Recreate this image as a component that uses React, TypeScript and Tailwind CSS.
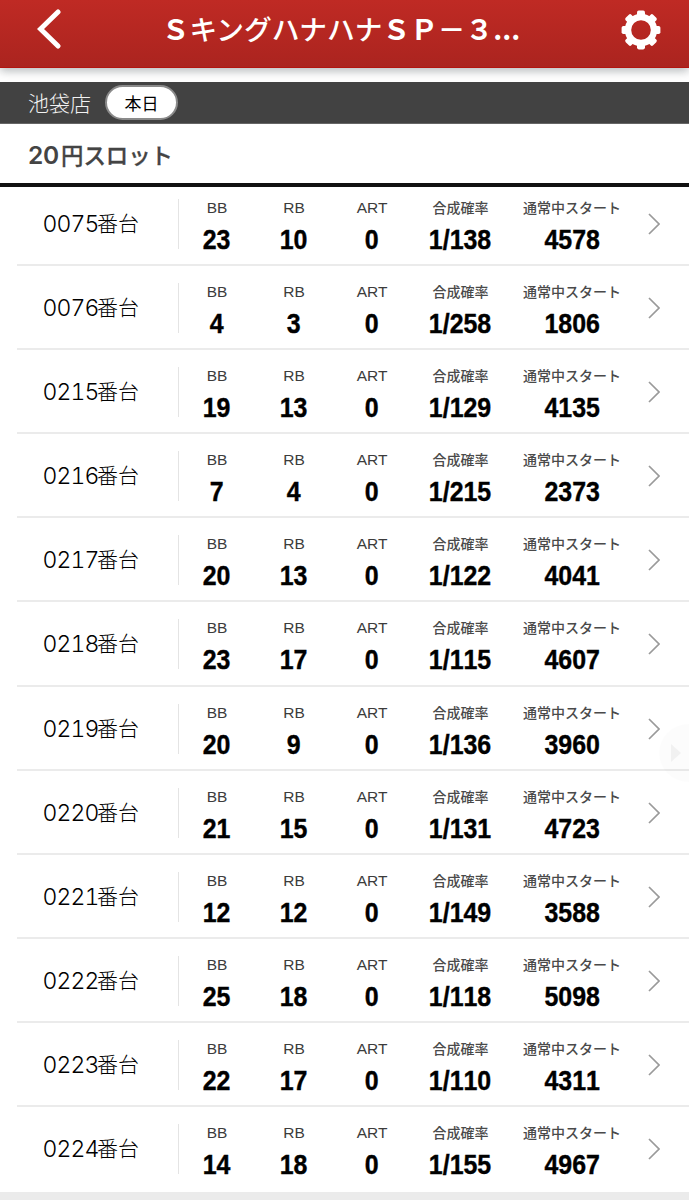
interface Machine {
  no: string;
  bb: number;
  rb: number;
  art: number;
  rate: string;
  start: number;
}

const machines: Machine[] = [
  { no: "0075", bb: 23, rb: 10, art: 0, rate: "1/138", start: 4578 },
  { no: "0076", bb: 4, rb: 3, art: 0, rate: "1/258", start: 1806 },
  { no: "0215", bb: 19, rb: 13, art: 0, rate: "1/129", start: 4135 },
  { no: "0216", bb: 7, rb: 4, art: 0, rate: "1/215", start: 2373 },
  { no: "0217", bb: 20, rb: 13, art: 0, rate: "1/122", start: 4041 },
  { no: "0218", bb: 23, rb: 17, art: 0, rate: "1/115", start: 4607 },
  { no: "0219", bb: 20, rb: 9, art: 0, rate: "1/136", start: 3960 },
  { no: "0220", bb: 21, rb: 15, art: 0, rate: "1/131", start: 4723 },
  { no: "0221", bb: 12, rb: 12, art: 0, rate: "1/149", start: 3588 },
  { no: "0222", bb: 25, rb: 18, art: 0, rate: "1/118", start: 5098 },
  { no: "0223", bb: 22, rb: 17, art: 0, rate: "1/110", start: 4311 },
  { no: "0224", bb: 14, rb: 18, art: 0, rate: "1/155", start: 4967 },
];

function GearIcon() {
  return (
    <svg viewBox="-20 -20 40 40" className="size-10">
      <circle r="13" fill="none" stroke="white" strokeWidth="6.4" />
      {[0, 45, 90, 135, 180, 225, 270, 315].map((deg) => (
        <rect
          key={deg}
          x="-4"
          y="-19.4"
          width="8"
          height="7"
          rx="1.8"
          fill="white"
          transform={`rotate(${deg})`}
        />
      ))}
    </svg>
  );
}

function Stat({ label, value }: { label: string; value: string | number }) {
  const latin = /^[A-Z]+$/.test(label);

  return (
    <div className="flex flex-col items-center whitespace-nowrap">
      {latin ? (
        <span className="h-5 text-[15.5px] leading-5 text-[#3c3c3c]">{label}</span>
      ) : (
        <span className="h-5 font-['Noto_Sans_CJK_JP',sans-serif] text-[14px] leading-[18px] font-medium text-[#4a4a4a]">
          {label}
        </span>
      )}
      <span className="mt-2 h-7 scale-x-[0.89] text-[28px] leading-7 font-bold text-black [font-kerning:none] [-webkit-text-stroke:0.4px_black]">
        {value}
      </span>
    </div>
  );
}

function MachineRow({ machine }: { machine: Machine }) {
  return (
    <li className="ml-[17px] flex h-[84.14px] items-start border-b-2 border-[#ebebeb] last:border-transparent">
      <div className="mt-[17px] flex h-[50px] w-[162px] shrink-0 items-center border-r border-[#e4e4e4] pl-[25.5px] font-['Inter','Noto_Sans_CJK_JP',sans-serif] font-light text-black">
        <span className="w-[54.5px] text-[23px] leading-[50px] tracking-[-0.9px] tabular-nums">
          {machine.no}
        </span>
        <span className="text-[21px] leading-[50px]">番台</span>
      </div>
      <div className="mt-4 -ml-[0.5px] grid w-[452px] shrink-0 grid-cols-[77px_77px_79px_98px_125px]">
        <Stat label="BB" value={machine.bb} />
        <Stat label="RB" value={machine.rb} />
        <Stat label="ART" value={machine.art} />
        <Stat label="合成確率" value={machine.rate} />
        <Stat label="通常中スタート" value={machine.start} />
      </div>
      <svg viewBox="0 0 12 22" className="mt-[31px] ml-[17.5px] h-[22px] w-3 shrink-0">
        <path d="M1 1l10 10L1 21" fill="none" stroke="#9a9a9a" strokeWidth="1.7" />
      </svg>
    </li>
  );
}

export default function App() {
  return (
    <main className="relative h-[1200px] w-full overflow-hidden bg-[#ebebeb] font-['Liberation_Sans','Noto_Sans_CJK_JP',sans-serif]">
      <div className="h-[1191.5px] bg-white">
        <header className="flex h-17 items-start justify-between border-b border-[#b3140f] bg-linear-to-b from-[#bf2a24] to-[#ab241f] shadow-[0_3px_9px_rgba(90,100,105,0.45)]">
          <svg viewBox="0 0 24 40" className="mt-[9px] ml-[37px] h-10 w-6">
            <path
              d="M21 3L3.5 20L21 37"
              fill="none"
              stroke="white"
              strokeWidth="5"
              strokeLinecap="round"
            />
          </svg>
          <h1 className="mt-2 w-[358px] font-['Noto_Sans_CJK_JP',sans-serif] text-[27.7px] leading-10 font-medium whitespace-nowrap text-white">
            <span className="font-bold">Ｓ</span>キングハナハナ
            <span className="font-bold">ＳＰ－３...</span>
          </h1>
          <div className="mt-[9.5px] mr-[28.5px]">
            <GearIcon />
          </div>
        </header>

        <div className="mt-3.5 flex h-[42px] items-center border-b border-[#666] bg-[#424242] pl-7">
          <span className="w-[77px] font-['Noto_Sans_CJK_JP',sans-serif] text-[21px] font-light text-[#f2f2f2]">
            池袋店
          </span>
          <span className="flex h-[35px] w-[73px] items-center justify-center rounded-full border-2 border-[#8a8a8a] bg-white font-['Noto_Sans_CJK_JP',sans-serif] text-[17px] leading-none text-black">
            本日
          </span>
        </div>

        <h2 className="flex h-[63px] border-b-4 border-[#111] pl-7 font-['Inter','Noto_Sans_CJK_JP',sans-serif] leading-[63px] text-[#444]">
          <span className="w-[33px] text-[24.5px] font-semibold tracking-[-0.3px]">20</span>
          <span className="text-[22.4px] font-medium [-webkit-text-stroke:0.3px_#444]">円スロット</span>
        </h2>

        <ul className="-mt-[5.2px]">
          {machines.map((m) => (
            <MachineRow key={m.no} machine={m} />
          ))}
        </ul>
      </div>

      {/* faded floating handle on the right edge */}
      <div className="absolute top-[724px] right-[-28px] flex size-[58px] items-center rounded-full bg-black/[0.012] pl-3">
        <svg viewBox="0 0 10 18" className="h-[18px] w-2.5">
          <path d="M0 0l10 9L0 18z" fill="#f1f1f1" />
        </svg>
      </div>
    </main>
  );
}
